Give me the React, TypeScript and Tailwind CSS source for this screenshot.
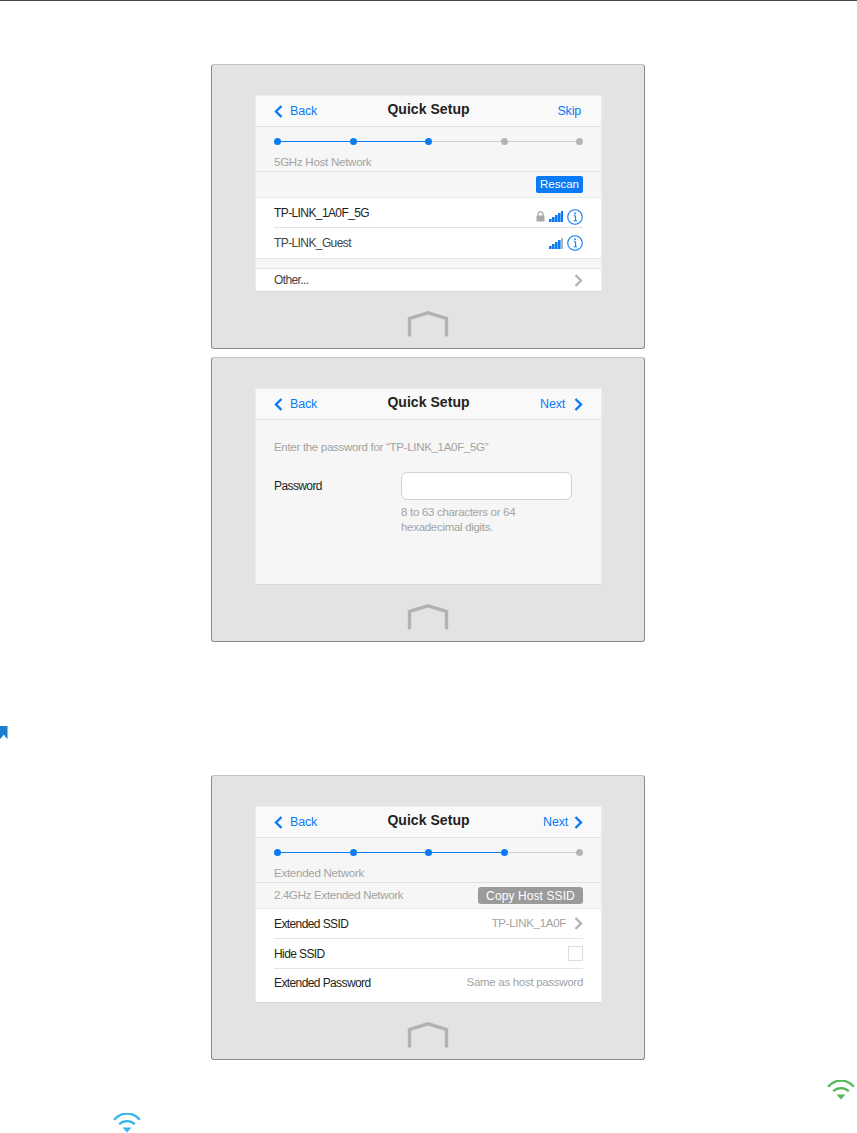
import React from "react";

const font = { fontFamily: '"Liberation Sans", Arial, sans-serif' };

function ChevronLeft() {
  return (
    <svg width="9" height="13" viewBox="0 0 9 13" className="shrink-0">
      <path d="M7.5 1 L2 6.5 L7.5 12" fill="none" stroke="#0a7af5" strokeWidth="2.4" />
    </svg>
  );
}
function ChevronRight({ color = "#0a7af5" }: { color?: string }) {
  return (
    <svg width="9" height="13" viewBox="0 0 9 13" className="shrink-0">
      <path d="M1.5 1 L7 6.5 L1.5 12" fill="none" stroke={color} strokeWidth="2.4" />
    </svg>
  );
}
function Home() {
  return (
    <svg width="42" height="26" viewBox="0 0 42 26" className="block">
      <path d="M2.5 24 V7.5 L21 1.8 L39.5 7.5 V24" fill="none" stroke="#b2b2b2" strokeWidth="3.4" strokeLinecap="round" />
    </svg>
  );
}
function Lock() {
  return (
    <svg width="9" height="11" viewBox="0 0 9 11" className="shrink-0">
      <path d="M2 5 V3.2 a2.5 2.5 0 0 1 5 0 V5" fill="none" stroke="#aaaaaa" strokeWidth="1.3" />
      <rect x="0.5" y="4.6" width="8" height="6" rx="0.8" fill="#aaaaaa" />
    </svg>
  );
}
function Signal({ lastGray = false }: { lastGray?: boolean }) {
  const bars = [3, 5, 7, 9, 11];
  return (
    <svg width="14" height="11" viewBox="0 0 14 11" className="shrink-0">
      {bars.map((h, i) => (
        <rect key={i} x={i * 3} y={11 - h} width="2.6" height={h} fill={lastGray && i === 4 ? "#b5b5b5" : "#0a7af5"} />
      ))}
    </svg>
  );
}
function Info() {
  return (
    <svg width="16" height="16" viewBox="0 0 16 16" className="shrink-0">
      <circle cx="8" cy="8" r="7.3" fill="none" stroke="#0a7af5" strokeWidth="1.1" />
      <circle cx="8" cy="4.5" r="0.9" fill="#0a7af5" />
      <path d="M6.6 6.9 H8.6 V11.5 M6.6 11.8 H10" fill="none" stroke="#0a7af5" strokeWidth="1" />
    </svg>
  );
}
function Wifi({ color }: { color: string }) {
  return (
    <svg width="28" height="20" viewBox="0 0 28 20" className="block">
      <path d="M1.2 6.8 C8 -1.5 20 -1.5 26.8 6.8" fill="none" stroke={color} strokeWidth="2.3" />
      <path d="M6.2 11.2 C10.5 7 17.5 7 21.8 11.2" fill="none" stroke={color} strokeWidth="2.3" />
      <path d="M9.5 14.5 H18.5 L14 19.5 Z" fill={color} />
    </svg>
  );
}

function Header({ right, gap = "gap-[9px]" }: { right: React.ReactNode; gap?: string }) {
  return (
    <div className="h-[31px] shrink-0 flex items-center justify-between px-[18px] border-b border-[#e2e2e2] bg-[#f9f9f9]">
      <div className="w-[100px] flex items-center gap-[7px] text-[12.5px] tracking-[-0.2px] text-[#0a7af5]">
        <ChevronLeft />
        <span>Back</span>
      </div>
      <div className="text-[14px] font-bold text-[#231f20] tracking-[0.05px] -mt-[4px]">Quick Setup</div>
      <div className={`w-[100px] flex items-center justify-end ${gap} text-[12.5px] tracking-[-0.2px] text-[#0a7af5]`}>
        {right}
      </div>
    </div>
  );
}

function Stepper({ active, label }: { active: number; label: string }) {
  const n = [0, 1, 2, 3, 4];
  return (
    <div className="h-[45px] shrink-0 pt-[11px] bg-[#f6f6f6] border-b border-[#e2e2e2]">
      <div className="flex items-center px-[18px]">
        {n.map((i) => (
          <React.Fragment key={i}>
            <span className={`w-[7px] h-[7px] rounded-full shrink-0 ${i <= active ? "bg-[#0a7af5]" : "bg-[#b4b4b4]"}`} />
            {i < 4 && <span className={`flex-1 h-px ${i < active ? "bg-[#0a7af5]" : "bg-[#cfcfcf]"}`} />}
          </React.Fragment>
        ))}
      </div>
      <div className="mt-[10px] ml-[18px] text-[11.5px] leading-[14px] tracking-[-0.25px] text-[#a3a3a3]">{label}</div>
    </div>
  );
}

function Panel({ children }: { children: React.ReactNode }) {
  return (
    <div className="w-[434px] h-[285px] ml-[211px] pt-[30px] pl-[43px] pr-[42px] bg-[#e3e3e3] rounded-[3px] border border-[#8a8a8a] border-t-[#c4c4c4]">
      <div className="h-[197px] flex flex-col bg-white border border-[#ededed] border-b-[#d9d9d9] overflow-hidden">
        {children}
      </div>
      <div className="mt-[19px] ml-[152px]">
        <Home />
      </div>
    </div>
  );
}

function Row({ children, h, divider = false }: { children: React.ReactNode; h: string; divider?: boolean }) {
  return (
    <div className={`mx-[18px] flex items-center justify-between ${h} ${divider ? "border-b border-[#e4e4e4]" : ""}`}>
      {children}
    </div>
  );
}

const rowText = "text-[12px] tracking-[-0.6px] text-[#231f20]";
const rowTextSoft = "text-[12px] tracking-[-0.6px] text-[#444444]";
const grayText = "text-[11.5px] tracking-[-0.3px] text-[#a3a3a3]";

export default function App() {
  return (
    <div style={font} className="w-[857px] h-[1133px] bg-white overflow-hidden">
      <div className="h-px bg-[#444444]" />
      <div className="h-[63px]" />
      <Panel>
        <Header right={<span className="mr-[2px]">Skip</span>} />
        <Stepper active={2} label="5GHz Host Network" />
        <div className="h-[26px] shrink-0 flex items-start justify-end pt-[4px] pr-[18px] bg-[#f6f6f6] border-b border-[#ececec]">
          <span className="h-[17px] w-[47px] flex items-center justify-center rounded-[2px] bg-[#0a7af5] text-white text-[11.5px]">Rescan</span>
        </div>
        <Row h="h-[30px] shrink-0" divider>
          <span className={rowText + " mt-[1px]"}>TP-LINK_1A0F_5G</span>
          <span className="flex items-center gap-[4px] mt-[8px]"><Lock /><Signal /><Info /></span>
        </Row>
        <Row h="h-[30px] shrink-0">
          <span className={rowTextSoft}>TP-LINK_Guest</span>
          <span className="flex items-center gap-[4px]"><Signal lastGray /><Info /></span>
        </Row>
        <div className="h-[11px] shrink-0 bg-[#f6f6f6] border-y border-[#e4e4e4]" />
        <Row h="flex-1">
          <span className={rowTextSoft}>Other...</span>
          <ChevronRight color="#b4b4b4" />
        </Row>
      </Panel>
      <div className="h-[8px]" />
      <Panel>
        <Header
          right={
            <>
              <span>Next</span>
              <ChevronRight />
            </>
          }
        />
        <div className="flex-1 bg-[#f6f6f6] px-[18px]">
          <div className={"mt-[19px] leading-[16px] " + grayText}>Enter the password for “TP-LINK_1A0F_5G”</div>
          <div className="mt-[17px] flex items-start">
            <span className={rowText + " w-[127px] mt-[7px] leading-[14px]"}>Password</span>
            <div>
              <div className="w-[171px] h-[28px] bg-white rounded-[6px] border border-[#d2d2d2]" />
              <div className={"mt-[5px] leading-[15px] " + grayText}>
                8 to 63 characters or 64
                <br />
                hexadecimal digits.
              </div>
            </div>
          </div>
        </div>
      </Panel>
      <div className="h-[84px]" />
      <svg width="8" height="13" viewBox="0 0 8 13" className="block">
        <path d="M0 0 H7.5 V13 L5.5 11 L3.8 8.5 L2 11 L0 13 Z" fill="#1a7fd0" />
      </svg>
      <div className="h-[36px]" />
      <Panel>
        <Header
          gap="gap-[6px]"
          right={
            <>
              <span>Next</span>
              <ChevronRight />
            </>
          }
        />
        <Stepper active={3} label="Extended Network" />
        <div className="h-[26px] shrink-0 flex items-center justify-between px-[18px] bg-[#f6f6f6] border-b border-[#ececec]">
          <span className={grayText}>2.4GHz Extended Network</span>
          <span className="h-[17px] w-[105px] flex items-center justify-center rounded-[3px] bg-[#9b9b9b] text-white text-[12px] tracking-[0.1px]">Copy Host SSID</span>
        </div>
        <Row h="h-[30px] shrink-0" divider>
          <span className={rowText}>Extended SSID</span>
          <span className="flex items-center gap-[8px]">
            <span className={grayText}>TP-LINK_1A0F</span>
            <ChevronRight color="#b4b4b4" />
          </span>
        </Row>
        <Row h="h-[30px] shrink-0" divider>
          <span className={rowText}>Hide SSID</span>
          <span className="w-[15px] h-[15px] bg-white border border-[#dedede]" />
        </Row>
        <Row h="flex-1">
          <span className={rowText + " -mt-[5px]"}>Extended Password</span>
          <span className={grayText + " -mt-[5px]"}>Same as host password</span>
        </Row>
      </Panel>
      <div className="h-[20px]" />
      <div className="flex justify-end pr-[2px]">
        <Wifi color="#55b95c" />
      </div>
      <div className="h-[13px]" />
      <div className="ml-[113px]">
        <Wifi color="#35b5ea" />
      </div>
    </div>
  );
}
